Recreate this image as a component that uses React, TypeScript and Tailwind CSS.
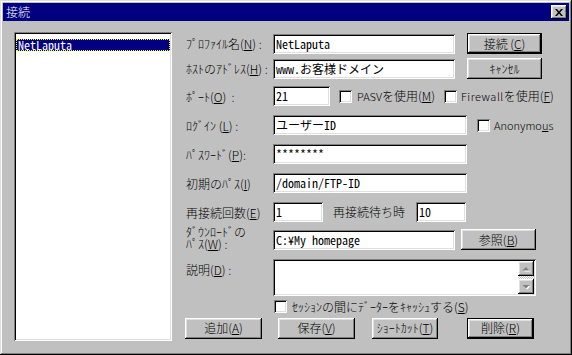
import type { ReactNode } from 'react';

const sunken =
  'bg-white shadow-[inset_1px_1px_#808080,inset_-1px_-1px_#fff,inset_2px_2px_#000,inset_-2px_-2px_#dfdfdf]';
const raised =
  'bg-[#c0c0c0] shadow-[inset_-1px_-1px_#000,inset_1px_1px_#fff,inset_-2px_-2px_#808080,inset_2px_2px_#dfdfdf]';
const mono = "font-['Noto_Sans_Mono_CJK_JP','Noto_Sans_CJK_JP',monospace]";

// mnemonic letter
function U({ c }: { c: string }) {
  return <span className="underline decoration-1 underline-offset-[1px]">{c}</span>;
}

function Label({ children, top }: { children: ReactNode; top?: boolean }) {
  return (
    <div className={`w-[87px] shrink-0 whitespace-nowrap leading-[13px] ${top ? 'self-start pt-[4px]' : ''}`}>
      {children}
    </div>
  );
}

function Field({ w, value }: { w: string; value?: string }) {
  return (
    <div className={`${w} h-[20px] shrink-0 ${sunken} pl-[3px] leading-[20px] whitespace-nowrap overflow-hidden ${mono}`}>
      {value}
    </div>
  );
}

function Btn({ w, children, def }: { w: string; children: ReactNode; def?: boolean }) {
  return (
    <div
      className={`${w} h-[21px] shrink-0 ${raised} ${def ? 'border border-black' : ''} flex items-center justify-center leading-[12px] whitespace-nowrap`}
    >
      {children}
    </div>
  );
}

function Check() {
  return <div className={`w-[13px] h-[13px] shrink-0 ${sunken}`} />;
}

function Arrow({ up }: { up?: boolean }) {
  return (
    <div className={`h-[15px] ${raised} flex items-center justify-center`}>
      <svg width="9" height="6" viewBox="0 0 9 6">
        {up ? (
          <>
            <polygon points="1.5,5.5 8.5,5.5 5,2" fill="#fff" />
            <polygon points="0.5,4.5 7.5,4.5 4,1" fill="#808080" />
          </>
        ) : (
          <>
            <polygon points="1.5,2 8.5,2 5,5.5" fill="#fff" />
            <polygon points="0.5,1 7.5,1 4,4.5" fill="#808080" />
          </>
        )}
      </svg>
    </div>
  );
}

export default function App() {
  return (
    <div
      className={`w-[572px] h-[355px] bg-[#c0c0c0] p-[3px] flex flex-col text-black text-[12px] font-light font-['Noto_Sans_CJK_JP',sans-serif] shadow-[inset_-1px_-1px_#000,inset_1px_1px_#dfdfdf,inset_-2px_-2px_#808080,inset_2px_2px_#fff]`}
    >
      {/* title bar */}
      <div className="h-[18px] shrink-0 bg-[#000080] flex items-center justify-between pl-[3px] pr-[2px]">
        <span className="text-white leading-[12px]">接続</span>
        <div className={`w-[16px] h-[14px] ${raised} flex items-center justify-center`}>
          <svg width="8" height="7" viewBox="0 0 8 7">
            <path d="M0 0h2l2 2.5L6 0h2L5 3.5 8 7H6L4 4.5 2 7H0l3-3.5z" fill="#000" />
          </svg>
        </div>
      </div>

      <div className="flex pl-[11px] pt-[11px]">
        {/* profile list */}
        <div className={`w-[158px] h-[309px] shrink-0 ${sunken} px-[2px] pt-[7px]`}>
          <div
            className={`h-[12px] bg-[#000080] text-white ${mono} leading-[12px] pl-[2px] outline-1 outline-dotted outline-[#ffff00] -outline-offset-1`}
          >
            NetLaputa
          </div>
        </div>

        {/* form */}
        <div className="ml-[14px] pt-[1px] flex flex-col">
          <div className="flex items-center h-[21px]">
            <Label>
              ﾌﾟﾛﾌｧｲﾙ名(<U c="N" />) :
            </Label>
            <Field w="w-[182px]" value="NetLaputa" />
            <div className="ml-[12px]">
              <Btn w="w-[75px]" def>
                接続 (<U c="C" />)
              </Btn>
            </div>
          </div>

          <div className="flex items-center h-[21px] mt-[4px]">
            <Label>
              ﾎｽﾄのｱﾄﾞﾚｽ(<U c="H" />) :
            </Label>
            <Field w="w-[182px]" value="www.お客様ドメイン" />
            <div className="ml-[12px]">
              <Btn w="w-[75px]">ｷｬﾝｾﾙ</Btn>
            </div>
          </div>

          <div className="flex items-center h-[20px] mt-[7px]">
            <Label>
              ﾎﾟｰﾄ(<U c="O" />)&nbsp;&nbsp;:
            </Label>
            <Field w="w-[57px]" value="21" />
            <div className="ml-[9px]">
              <Check />
            </div>
            <div className="w-[92px] pl-[5px] whitespace-nowrap">
              <span className="text-[11px]">PASV</span>を使用(<U c="M" />)
            </div>
            <Check />
            <div className="pl-[4px] whitespace-nowrap">
              <span className="text-[11px] tracking-[0.5px]">Firewall</span>を使用(<U c="F" />)
            </div>
          </div>

          <div className="flex items-center h-[20px] mt-[9px]">
            <Label>
              ﾛｸﾞｲﾝ (<U c="L" />) :
            </Label>
            <Field w="w-[194px]" value="ユーザーID" />
            <div className="ml-[10px]">
              <Check />
            </div>
            <div className="pl-[4px] whitespace-nowrap text-[11px]">
              Anonymo<U c="u" />s
            </div>
          </div>

          <div className="flex items-center h-[20px] mt-[9px]">
            <Label>
              ﾊﾟｽﾜｰﾄﾞ(<U c="P" />):
            </Label>
            <Field w="w-[194px]" value="********" />
          </div>

          <div className="flex items-center h-[20px] mt-[9px]">
            <Label>
              初期のﾊﾟｽ(<U c="I" />)
            </Label>
            <Field w="w-[194px]" value="/domain/FTP-ID" />
          </div>

          <div className="flex items-center h-[20px] mt-[9px]">
            <Label>
              再接続回数(<U c="E" />)
            </Label>
            <Field w="w-[50px]" value="1" />
            <div className="w-[93px] pl-[10px] whitespace-nowrap">再接続待ち時</div>
            <Field w="w-[50px]" value="10" />
          </div>

          <div className="flex items-center h-[21px] mt-[7px]">
            <div className="w-[87px] shrink-0 flex flex-col -mt-[4px]">
              <div className="h-[12px] leading-[12px] whitespace-nowrap">ﾀﾞｳﾝﾛｰﾄﾞの</div>
              <div className="h-[12px] leading-[12px] whitespace-nowrap">
                ﾊﾟｽ(<U c="W" />) :
              </div>
            </div>
            <Field w="w-[182px]" value="C:¥My homepage" />
            <div className="ml-[6px]">
              <Btn w="w-[75px]">
                参照(<U c="B" />)
              </Btn>
            </div>
          </div>

          <div className="flex h-[37px] mt-[9px]">
            <Label top>
              説明(<U c="D" />) :
            </Label>
            <div className={`w-[263px] h-[37px] ${sunken} flex justify-end p-[2px]`}>
              <div className="w-[16px] flex flex-col">
                <Arrow up />
                <div className="flex-1 bg-[repeating-conic-gradient(#c0c0c0_0_25%,#fff_0_50%)] bg-[length:2px_2px]" />
                <Arrow />
              </div>
            </div>
          </div>

          <div className="flex items-center h-[13px] mt-[4px] pl-[88px]">
            <Check />
            <div className="pl-[5px] whitespace-nowrap leading-[13px]">
              ｾｯｼｮﾝの間にﾃﾞｰﾀｰをｷｬｯｼｭする(<U c="S" />)
            </div>
          </div>

          <div className="flex items-center h-[20px] mt-[5px] -ml-[1px]">
            <Btn w="w-[77px]">
              追加(<U c="A" />)
            </Btn>
            <div className="ml-[16px]">
              <Btn w="w-[77px]">
                保存(<U c="V" />)
              </Btn>
            </div>
            <div className="ml-[17px]">
              <Btn w="w-[66px]">
                ｼｮｰﾄｶｯﾄ(<U c="T" />)
              </Btn>
            </div>
            <div className="ml-[29px]">
              <Btn w="w-[67px]" def>
                削除(<U c="R" />)
              </Btn>
            </div>
          </div>
        </div>
      </div>
    </div>
  );
}
